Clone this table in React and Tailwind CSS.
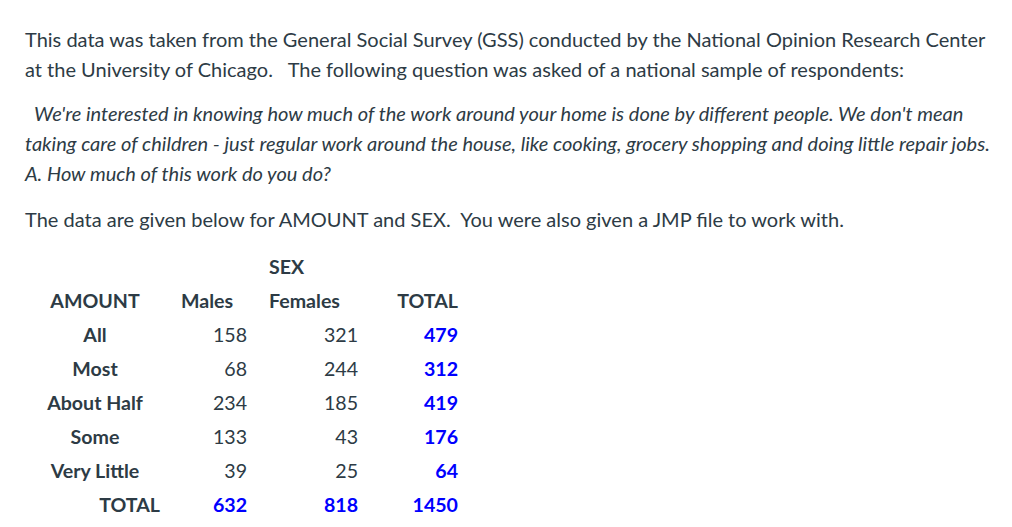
export default function App() {
  const rows = [
    ["All", "158", "321", "479"],
    ["Most", "68", "244", "312"],
    ["About Half", "234", "185", "419"],
    ["Some", "133", "43", "176"],
    ["Very Little", "39", "25", "64"],
  ];
  const c = "h-[34px] leading-[30px]";
  return (
    <div className="w-[1012px] h-[527px] overflow-hidden bg-white text-[#2d3b45] font-['Lato',sans-serif] text-[20px] leading-[30px] pl-[25px] pr-[15px] pt-[24px]">
      <p className="mb-[14px]">
        This data was taken from the General Social Survey (GSS) conducted by the National Opinion Research Center at the University of Chicago.{"\u00a0\u00a0 "}The following question was asked of a national sample of respondents:
      </p>
      <p className="italic mb-[16px]">
        {"\u00a0\u00a0"}We're interested in knowing how much of the work around your home is done by different people. We don't mean taking care of children - just regular work around the house, like cooking, grocery shopping and doing little repair jobs.
        <br />
        A. How much of this work do you do?
      </p>
      <p className="mb-[18px]">
        The data are given below for AMOUNT and SEX.{"\u00a0 "}You were also given a JMP file to work with.
      </p>
      <div className="grid grid-cols-[130px_87px_111px_100px] ml-[5px] w-fit text-[19.6px]">
        <div className={c} />
        <div className={c} />
        <div className={`${c} font-bold pl-[22px]`}>SEX</div>
        <div className={c} />

        <div className={`${c} font-bold text-center`}>AMOUNT</div>
        <div className={`${c} font-bold pl-[21px]`}>Males</div>
        <div className={`${c} font-bold pl-[22px]`}>Females</div>
        <div className={`${c} font-bold text-right`}>TOTAL</div>

        {rows.map((r) => (
          <div key={r[0]} className="contents">
            <div className={`${c} font-bold text-center`}>{r[0]}</div>
            <div className={`${c} text-right`}>{r[1]}</div>
            <div className={`${c} text-right`}>{r[2]}</div>
            <div className={`${c} text-right font-bold text-[#0000ff]`}>{r[3]}</div>
          </div>
        ))}

        <div className={`${c} font-bold text-right`}>TOTAL</div>
        <div className={`${c} text-right font-bold text-[#0000ff]`}>632</div>
        <div className={`${c} text-right font-bold text-[#0000ff]`}>818</div>
        <div className={`${c} text-right font-bold text-[#0000ff]`}>1450</div>
      </div>
    </div>
  );
}
